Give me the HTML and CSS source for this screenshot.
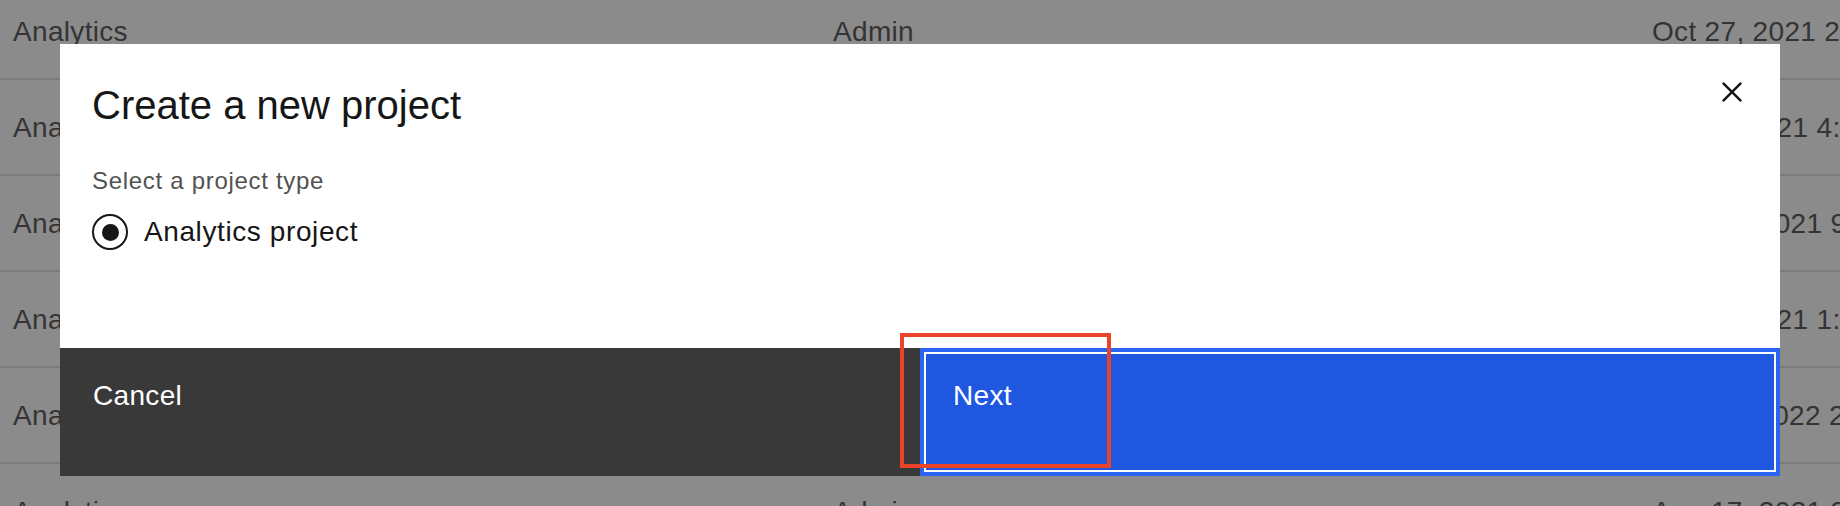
FILE: index.html
```html
<!DOCTYPE html>
<html lang="en">
<head>
<meta charset="utf-8">
<title>Create a new project</title>
<link rel="stylesheet" href="styles.css">
</head>
<body>
<div class="table">
  <div class="row"><span class="cell">Analytics</span><span class="cell">Admin</span><span class="cell">Oct 27, 2021 2:14 PM</span></div>
  <div class="row"><span class="cell">Analytics</span><span class="cell">Admin</span><span class="cell">Jul 26, 2021 4:32 PM</span></div>
  <div class="row"><span class="cell">Analytics</span><span class="cell">Admin</span><span class="cell">Nov 30, 2021 9:41 AM</span></div>
  <div class="row"><span class="cell">Analytics</span><span class="cell">Admin</span><span class="cell">Jul 21, 2021 1:05 PM</span></div>
  <div class="row"><span class="cell">Analytics</span><span class="cell">Admin</span><span class="cell">Feb 14, 2022 2:27 PM</span></div>
  <div class="row"><span class="cell">Analytics</span><span class="cell">Admin</span><span class="cell">Aug 17, 2021 3:50 PM</span></div>
</div>

<div class="modal" role="dialog" aria-label="Create a new project">
  <div class="modal-header">
    <h2 class="modal-title">Create a new project</h2>
  </div>
  <button class="modal-close" aria-label="Close">
    <svg class="close-icon" viewBox="0 0 32 32" width="40" height="40" aria-hidden="true"><path d="M24 9.4L22.6 8 16 14.6 9.4 8 8 9.4 14.6 16 8 22.6 9.4 24 16 17.4 22.6 24 24 22.6 17.4 16 24 9.4z"/></svg>
  </button>
  <div class="modal-body">
    <div class="radio-legend">Select a project type</div>
    <label class="radio">
      <span class="radio-circle"><span class="radio-dot"></span></span>
      <span class="radio-label">Analytics project</span>
    </label>
  </div>
  <div class="modal-footer">
    <button class="btn btn-secondary">Cancel</button>
    <button class="btn btn-primary">Next</button>
  </div>
</div>

<div class="annotation"></div>
</body>
</html>
```
FILE: styles.css
```css
html, body {
  margin: 0;
  padding: 0;
}
body {
  width: 1840px;
  height: 506px;
  overflow: hidden;
  position: relative;
  background: #8b8b8b;
  font-family: "Liberation Sans", Arial, sans-serif;
}
.table {
  margin-top: -16px;
}
.row {
  display: grid;
  grid-template-columns: 820px 819px 1fr;
  height: 92px;
  padding: 2px 0 0 13px;
  box-sizing: content-box;
  border-bottom: 2px solid #7b7b7b;
  align-items: center;
}
.cell {
  font-size: 28px;
  line-height: 40px;
  letter-spacing: 0.32px;
  color: #343434;
  white-space: nowrap;
}
.modal {
  position: absolute;
  left: 60px;
  top: 44px;
  width: 1720px;
  height: 432px;
  background: #ffffff;
  display: flex;
  flex-direction: column;
}
.modal-header {
  padding: 33px 96px 0 32px;
}
.modal-title {
  margin: 0;
  font-size: 40px;
  line-height: 56px;
  font-weight: 400;
  color: #161616;
}
.modal-close {
  position: absolute;
  top: 0;
  right: 0;
  width: 96px;
  height: 96px;
  border: 0;
  padding: 0;
  background: transparent;
  display: flex;
  align-items: center;
  justify-content: center;
}
.close-icon {
  fill: #161616;
  display: block;
}
.modal-body {
  flex: 1;
  padding: 32px 32px 0 32px;
}
.radio-legend {
  font-size: 24px;
  line-height: 32px;
  letter-spacing: 0.7px;
  color: #525252;
  margin-bottom: 15px;
}
.radio {
  display: flex;
  align-items: center;
  gap: 16px;
  height: 40px;
}
.radio-circle {
  width: 36px;
  height: 36px;
  box-sizing: border-box;
  border: 2.5px solid #161616;
  border-radius: 50%;
  display: flex;
  align-items: center;
  justify-content: center;
}
.radio-dot {
  width: 17px;
  height: 17px;
  border-radius: 50%;
  background: #161616;
}
.radio-label {
  font-size: 28px;
  line-height: 40px;
  letter-spacing: 0.6px;
  color: #161616;
}
.modal-footer {
  height: 128px;
  display: grid;
  grid-template-columns: 1fr 1fr;
}
.btn {
  margin: 0;
  border: 0;
  font-family: inherit;
  font-size: 28px;
  line-height: 36px;
  letter-spacing: 0.32px;
  color: #ffffff;
  text-align: left;
  display: flex;
  align-items: flex-start;
  box-sizing: border-box;
  height: 128px;
}
.btn-secondary {
  background: #393939;
  padding: 30px 0 0 33px;
}
.btn-primary {
  background: #1f57e0;
  border: 4px solid #2a64f4;
  box-shadow: inset 0 0 0 2px #ffffff;
  padding: 26px 0 0 29px;
}
.annotation {
  position: absolute;
  left: 900px;
  top: 333px;
  width: 211px;
  height: 135px;
  box-sizing: border-box;
  border: 4px solid #ea4329;
}
```
